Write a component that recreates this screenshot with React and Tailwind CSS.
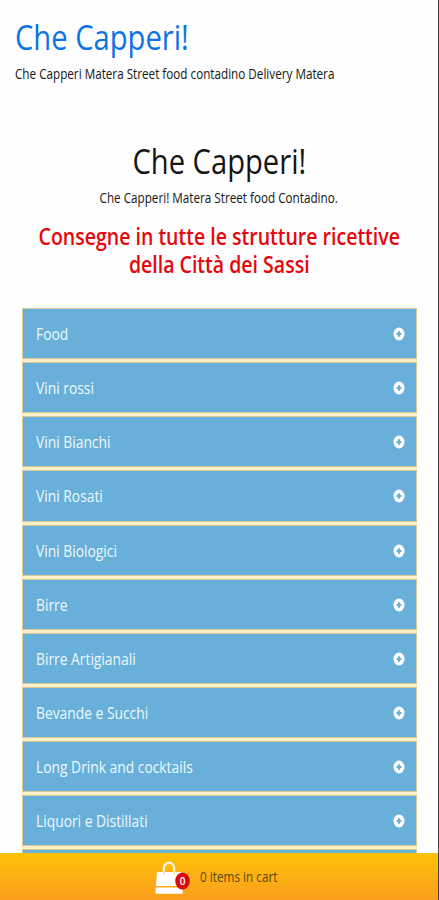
const categories = [
  'Food',
  'Vini rossi',
  'Vini Bianchi',
  'Vini Rosati',
  'Vini Biologici',
  'Birre',
  'Birre Artigianali',
  'Bevande e Succhi',
  'Long Drink and cocktails',
  'Liquori e Distillati',
  '',
];

function PlusCircle() {
  return (
    <svg className="h-[14px] w-[12px] shrink-0" viewBox="0 0 12 14" preserveAspectRatio="none">
      <ellipse cx="6" cy="7" rx="5.5" ry="6.4" fill="#fff" />
      <path d="M6 4.3v5.4M3.5 7h5" stroke="#68b0d9" strokeWidth="2.2" />
    </svg>
  );
}

function Bag() {
  return (
    <svg className="h-[34px] w-[36px]" viewBox="0 0 36 34">
      <path d="M8.8 13V7.5a5.2 5.8 0 0 1 10.4 0V13" fill="none" stroke="#fff9df" strokeWidth="2.2" />
      <path d="M2 11h24.5l.9 14H.9z" fill="#fff" />
      <path d="M.7 26.5h26.8l.2 6.3H.5z" fill="#fff" />
      <path d="M8.8 10v4M19.2 10v4" stroke="#f8d477" strokeWidth="1" />
      <ellipse cx="27.5" cy="20" rx="7.3" ry="8.6" fill="#db0711" />
      <text x="27.5" y="23.5" textAnchor="middle" fontSize="10" fontWeight="600" fill="#fff">0</text>
    </svg>
  );
}

export default function App() {
  return (
    <div className="flex h-[900px] w-[439px] flex-col overflow-hidden border-r border-[#444] bg-[#fefefe] font-['Open_Sans','Noto_Sans',sans-serif] text-[#151515]">
      <header className="flex h-[130px] shrink-0 flex-col items-start pl-[15px] pt-[15px]">
        <h1 className="origin-left scale-x-[0.833] whitespace-nowrap text-[35px] leading-[44px] text-[#0c73e6]">Che Capperi!</h1>
        <p className="mt-[5px] origin-left scale-x-[0.835] whitespace-nowrap text-[14px] leading-[20px]">
          Che Capperi Matera Street food contadino Delivery Matera
        </p>
      </header>
      <main className="flex h-[723px] shrink-0 flex-col overflow-hidden">
        <section className="flex h-[178px] shrink-0 flex-col items-center pt-[9px]">
          <h2 className="scale-x-[0.833] whitespace-nowrap text-[35px] leading-[44px]">Che Capperi!</h2>
          <p className="mt-[5px] scale-x-[0.835] whitespace-nowrap text-[14px] leading-[20px]">
            Che Capperi! Matera Street food Contadino.
          </p>
          <h3 className="mt-[14px] scale-x-[0.813] whitespace-nowrap text-center text-[24px] font-semibold leading-[28px] text-[#e5060b]">
            Consegne in tutte le strutture ricettive
            <br />
            della Città dei Sassi
          </h3>
        </section>
        <ul className="ml-[22px] w-[395px] bg-[#fff0c8]">
          {categories.map((name, i) => (
            <li key={i} className="h-[54.15px] pb-[3px]">
              <div className="flex h-full items-center justify-between border border-[#d8c894] bg-[#68b0d9] pl-[13px] pr-[11px] pt-px text-[#eef8fd]">
                <span className="origin-left scale-x-[0.813] whitespace-nowrap text-[17px] leading-[24px]">{name}</span>
                <PlusCircle />
              </div>
            </li>
          ))}
        </ul>
      </main>
      <footer className="flex h-[47px] shrink-0 items-start bg-linear-to-b from-[#fdc202] to-[#fb9f1d] pl-[155px] pt-[8px]">
        <Bag />
        <span className="ml-[9px] mt-[6px] origin-left scale-x-[0.84] whitespace-nowrap text-[14px] leading-[20px] text-[#5c4912]">0 items in cart</span>
      </footer>
    </div>
  );
}
